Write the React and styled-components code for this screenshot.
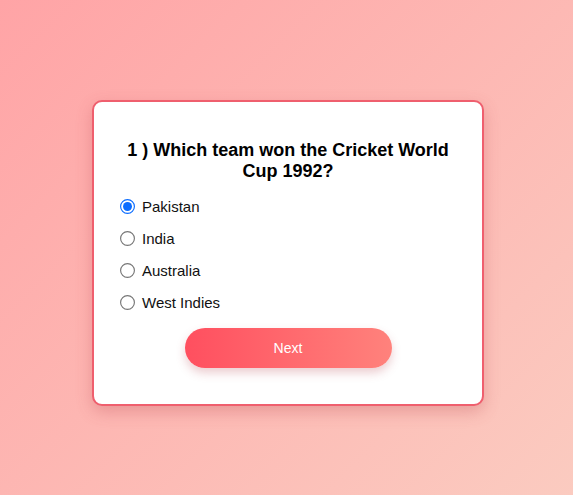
import React, { useState } from 'react'
import styled, { createGlobalStyle } from 'styled-components'

const GlobalStyle = createGlobalStyle`
  html, body {
    margin: 0;
    padding: 0;
  }
  body {
    font-family: "Liberation Sans", Arial, sans-serif;
    background: linear-gradient(135deg, #ffa4a6 0%, #fbcbc0 100%);
    min-height: 100vh;
  }
`

const Page = styled.div`
  min-height: 100vh;
  box-sizing: border-box;
  display: flex;
  justify-content: center;
  align-items: center;
  padding: 11px 0 0 3px;
`

const Card = styled.div`
  width: 392px;
  box-sizing: border-box;
  background: #fff;
  border: 2px solid #ef5f6e;
  border-radius: 10px;
  box-shadow: 0 6px 16px rgba(190, 70, 80, 0.3);
  padding: 38px 25px 36px;
  display: flex;
  flex-direction: column;
`

const Question = styled.h2`
  margin: 0 0 8px;
  font-size: 18px;
  line-height: 21px;
  font-weight: 700;
  text-align: center;
  color: #000;
  padding: 0 8px;
`

const Options = styled.div`
  display: flex;
  flex-direction: column;
`

const Option = styled.label`
  display: flex;
  align-items: center;
  height: 32px;
  font-size: 15px;
  color: #111;
  cursor: pointer;

  input {
    margin: 0 8px 0 2px;
    width: 13px;
    height: 13px;
    transform: scale(1.15);
    accent-color: #0a6cff;
  }
`

const NextButton = styled.button`
  align-self: center;
  margin-top: 10px;
  width: 207px;
  height: 40px;
  border: none;
  border-radius: 20px;
  background: linear-gradient(90deg, #ff4f5f 0%, #ff827c 100%);
  color: #fff;
  font-family: "Liberation Sans", Arial, sans-serif;
  font-size: 14px;
  box-shadow: 0 5px 10px rgba(180, 60, 70, 0.25);
  cursor: pointer;
`

const answers = ['Pakistan', 'India', 'Australia', 'West Indies']

export default function App() {
  const [picked, setPicked] = useState('Pakistan')

  return (
    <>
      <GlobalStyle />
      <Page>
        <Card>
          <Question>1 ) Which team won the Cricket World Cup 1992?</Question>
          <Options>
            {answers.map((a) => (
              <Option key={a}>
                <input
                  type="radio"
                  name="answer"
                  checked={picked === a}
                  onChange={() => setPicked(a)}
                />
                {a}
              </Option>
            ))}
          </Options>
          <NextButton>Next</NextButton>
        </Card>
      </Page>
    </>
  )
}
